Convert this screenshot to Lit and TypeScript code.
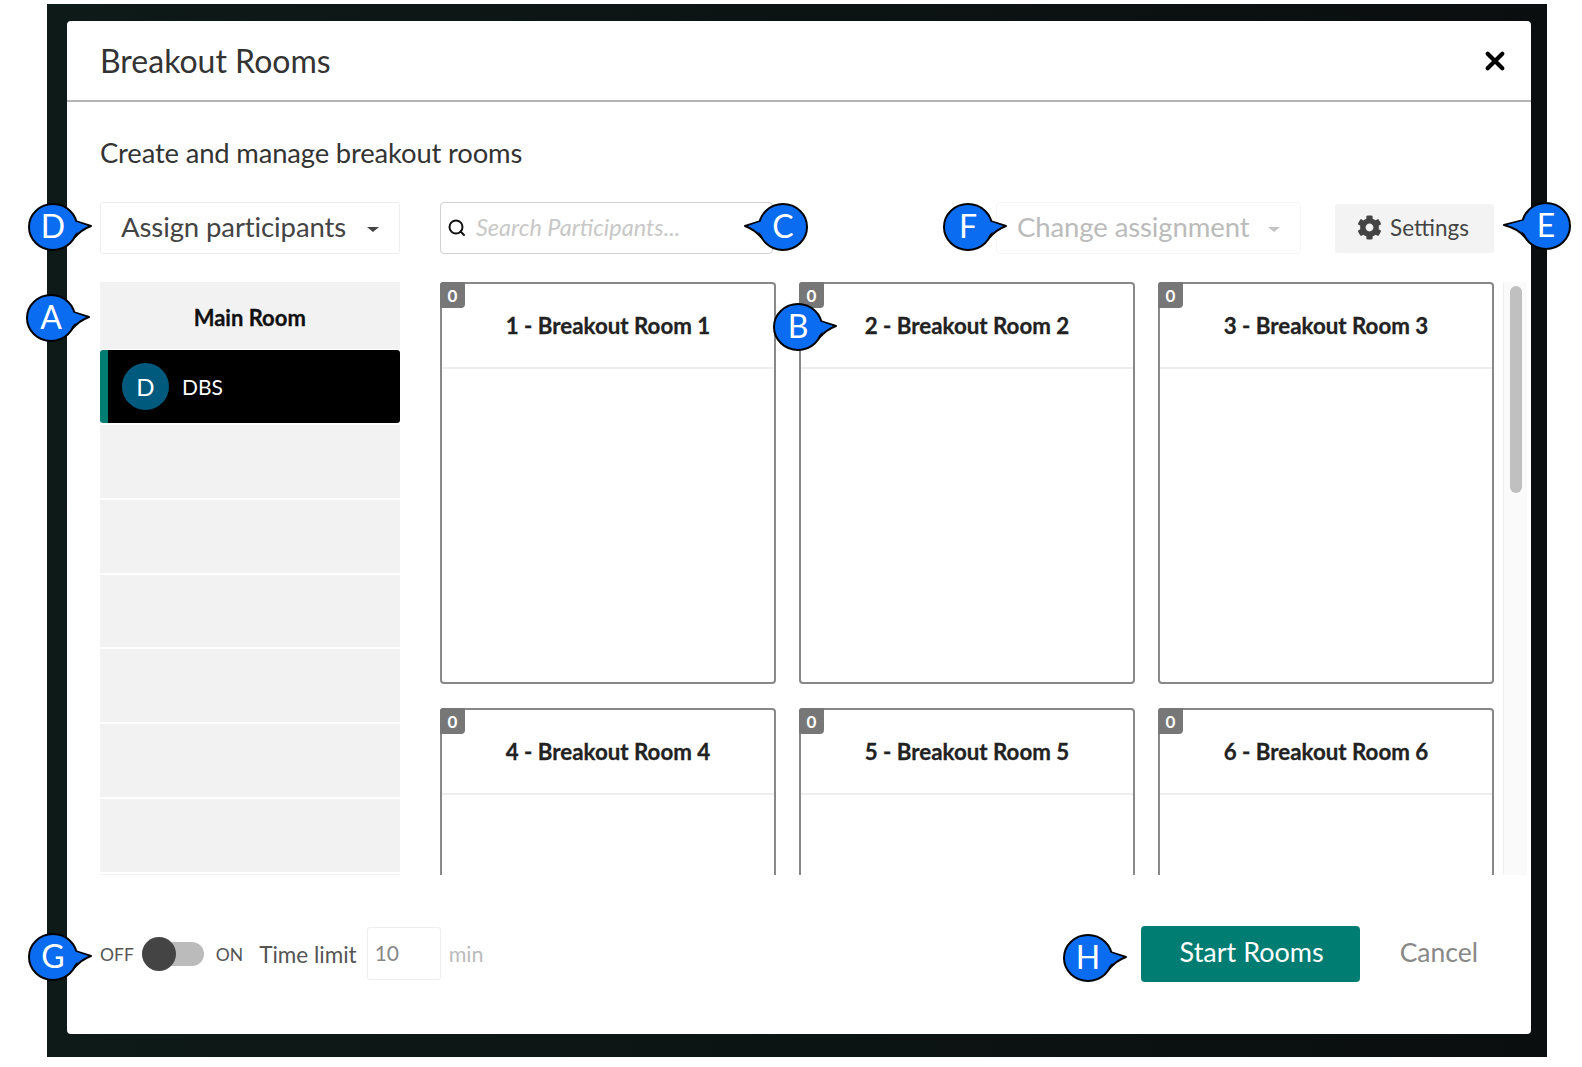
import { LitElement, html, css, svg } from 'lit';
import { customElement } from 'lit/decorators.js';

// label, centre x/y, direction of the tail, tail length
const CALLOUTS: [string, number, number, number, number][] = [
  ['D', 53, 227, 1, 38],
  ['A', 51, 318, 1, 38],
  ['C', 783, 227, -1, 38],
  ['B', 798, 327, 1, 38],
  ['F', 968, 227, 1, 38],
  ['E', 1546, 226, -1, 42],
  ['G', 53, 957, 1, 38],
  ['H', 1088, 958, 1, 38],
];

const ROOMS = [1, 2, 3, 4, 5, 6];

@customElement('app-root')
export class AppRoot extends LitElement {
  static styles = css`
    :host {
      display: block;
      position: relative;
      height: 1067px;
      overflow: hidden;
      background: #fff;
      font-family: 'Lato', 'Noto Sans', sans-serif;
      color: #333;
    }
    .frame {
      margin: 4px 35px 0 47px;
      height: 1053px;
      box-sizing: border-box;
      padding: 17px 16px 23px 20px;
      background: linear-gradient(90deg, #0e1a18, #0a0e0e);
    }
    .modal {
      height: 100%;
      background: #fff;
      border-radius: 4px;
      display: flex;
      flex-direction: column;
    }
    .head {
      height: 81px;
      flex: none;
      box-sizing: border-box;
      border-bottom: 2px solid #b4b4b4;
      padding: 0 25px 0 33px;
      display: flex;
      align-items: center;
      justify-content: space-between;
    }
    .title {
      font-size: 32px;
      color: #333;
    }
    .close {
      width: 22px;
      height: 22px;
      display: block;
    }
    .body {
      flex: 1;
      min-height: 0;
      padding: 0 0 0 33px;
      display: flex;
      flex-direction: column;
    }
    .sub {
      height: 100px;
      flex: none;
      box-sizing: border-box;
      padding-top: 30px;
      font-size: 27.4px;
      line-height: 42px;
      letter-spacing: -0.15px;
      color: #333;
    }
    .tools {
      flex: none;
      height: 52px;
      display: flex;
      align-items: center;
    }
    .drop {
      width: 299.5px;
      height: 52px;
      box-sizing: border-box;
      border: 1.5px solid #efefef;
      border-radius: 3px;
      display: flex;
      align-items: center;
      padding: 0 20px 3px;
      justify-content: space-between;
      font-size: 27.5px;
      letter-spacing: -0.1px;
      color: #444;
    }
    .caret {
      width: 0;
      height: 0;
      border-left: 6px solid transparent;
      border-right: 6px solid transparent;
      border-top: 5px solid #444;
      margin-top: 6px;
    }
    .search {
      width: 333px;
      height: 52px;
      margin-left: 40.5px;
      box-sizing: border-box;
      border: 1.5px solid #d0d0d0;
      border-radius: 4px;
      display: flex;
      align-items: center;
      padding: 0 0 2px 6px;
      gap: 9px;
      font-size: 23.5px;
      font-style: italic;
      color: #c8c8c8;
    }
    .search svg {
      width: 20px;
      height: 20px;
      margin-top: 2px;
    }
    .drop.off {
      width: 305px;
      margin-left: auto;
      border-color: #f6f6f6;
      color: #bbb;
    }
    .drop.off .caret {
      border-top-color: #c4c4c4;
    }
    .settings {
      width: 159px;
      height: 49px;
      margin: 0 37px 0 34px;
      box-sizing: border-box;
      padding: 0 3px 2px 0;
      background: #f3f3f3;
      border-radius: 3px;
      display: flex;
      align-items: center;
      justify-content: center;
      gap: 8px;
      font-size: 22.5px;
      color: #444;
    }
    .settings svg {
      width: 25px;
      height: 25px;
    }
    .main {
      flex: 1;
      min-height: 0;
      margin-top: 28px;
      display: flex;
      overflow: hidden;
    }
    .left {
      width: 299.5px;
      flex: none;
      display: flex;
      flex-direction: column;
      gap: 2px;
    }
    .left-head {
      height: 67px;
      flex: none;
      box-sizing: border-box;
      padding-top: 3px;
      background: #f2f2f2;
      display: flex;
      align-items: center;
      justify-content: center;
      font-weight: 700;
      font-size: 22px;
      -webkit-text-stroke: 0.3px #111;
      color: #111;
    }
    .person {
      height: 73px;
      flex: none;
      margin-top: -1px;
      background: #000;
      border-left: 8px solid #007d73;
      border-radius: 3px;
      display: flex;
      align-items: center;
      gap: 13px;
      padding-left: 14px;
      color: #fff;
      font-size: 21px;
    }
    .avatar {
      width: 47px;
      height: 47px;
      border-radius: 50%;
      background: #005a7d;
      display: flex;
      align-items: center;
      justify-content: center;
      font-size: 24px;
    }
    .slot {
      height: 72.8px;
      flex: none;
      background: #f2f2f2;
    }
    .grid {
      margin-left: 40.5px;
      width: 1054px;
      display: grid;
      grid-template-columns: repeat(3, 336px);
      grid-auto-rows: 402px;
      column-gap: 23px;
      row-gap: 24px;
      flex: none;
    }
    .card {
      position: relative;
      box-sizing: border-box;
      border: 2px solid #888;
      border-radius: 4px;
    }
    .card-head {
      height: 85px;
      box-sizing: border-box;
      border-bottom: 2px solid #eee;
      display: flex;
      align-items: center;
      justify-content: center;
      font-weight: 700;
      font-size: 22.3px;
      -webkit-text-stroke: 0.3px #222;
      color: #222;
    }
    .count {
      position: absolute;
      left: -2px;
      top: -2px;
      width: 25px;
      height: 26px;
      background: #777;
      border-radius: 3px 0 4px 0;
      color: #fff;
      font-weight: 700;
      font-size: 17px;
      line-height: 27px;
      text-align: center;
    }
    .track {
      flex: none;
      width: 24px;
      margin-left: 9px;
      box-sizing: border-box;
      border-left: 1px solid #eee;
      background: #fafafa;
      padding: 4px 5px 0 6px;
    }
    .thumb {
      height: 207px;
      background: #c0c0c0;
      border-radius: 7px;
    }
    .foot {
      flex: none;
      height: 159px;
      box-sizing: border-box;
      padding: 0 53px 1px 33px;
      display: flex;
      align-items: center;
      font-size: 17.5px;
      color: #555;
    }
    .toggle {
      position: relative;
      width: 62px;
      height: 24px;
      margin: 0 12px 0 8px;
      background: #bbb;
      border-radius: 12px;
    }
    .knob {
      position: absolute;
      left: 0;
      top: -5px;
      width: 34px;
      height: 34px;
      border-radius: 50%;
      background: #444;
    }
    .limit {
      margin-left: 16px;
      font-size: 22.5px;
    }
    .minutes {
      width: 74px;
      height: 53px;
      margin: 0 0 1px 10px;
      box-sizing: border-box;
      border: 1.5px solid #eee;
      border-radius: 3px;
      padding: 0 0 3px 7px;
      display: flex;
      align-items: center;
      font-size: 21px;
      color: #888;
    }
    .min {
      margin-left: 8px;
      font-size: 21.5px;
      color: #bbb;
    }
    .start {
      margin: 0 0 1px auto;
      width: 219px;
      height: 56px;
      box-sizing: border-box;
      padding: 0 0 4px 3px;
      background: #007d73;
      border-radius: 4px;
      color: #fff;
      font-size: 27px;
      display: flex;
      align-items: center;
      justify-content: center;
    }
    .cancel {
      margin: 0 0 5px 40px;
      font-size: 26.5px;
      color: #888;
    }
    .callout {
      position: absolute;
      width: 100px;
      height: 60px;
      overflow: visible;
    }
    .callout text {
      font-family: 'Lato', sans-serif;
      font-size: 32px;
      fill: #fff;
      text-anchor: middle;
    }
  `;

  renderCallout(c: [string, number, number, number, number]) {
    const [label, x, y, dir, tip] = c;
    return html`<svg
      class="callout"
      viewBox="-50 -30 100 60"
      style="left:${x - 50}px;top:${y - 30}px"
    >
      ${svg`<g transform="scale(${dir},1)">
        <path d="M22 -6L${tip} -1Q29 2 20 12Z" fill="#0a6cf0" stroke="#000" stroke-width="2" stroke-linejoin="round" />
        <ellipse rx="24" ry="23" fill="#0a6cf0" stroke="#000" stroke-width="2" />
        <path d="M21 -6L${tip - 3} -1Q28 1 19 10Z" fill="#0a6cf0" />
      </g>`}
      <text y="11">${label}</text>
    </svg>`;
  }

  renderCard(n: number) {
    return html`<div class="card">
      <div class="count">0</div>
      <div class="card-head">${n} - Breakout Room ${n}</div>
    </div>`;
  }

  render() {
    return html`
      <div class="frame">
        <div class="modal">
          <div class="head">
            <span class="title">Breakout Rooms</span>
            <svg class="close" viewBox="0 0 24 24">
              <path d="M4 4L20 20M20 4L4 20" stroke="#000" stroke-width="4.6" stroke-linecap="round" />
            </svg>
          </div>
          <div class="body">
            <div class="sub">Create and manage breakout rooms</div>
            <div class="tools">
              <div class="drop">Assign participants<span class="caret"></span></div>
              <div class="search">
                <svg viewBox="0 0 20 20" fill="none" stroke="#111" stroke-width="2">
                  <circle cx="9" cy="9" r="6.5" />
                  <path d="M13.5 13.5L17 17" stroke-linecap="round" />
                </svg>
                Search Participants...
              </div>
              <div class="drop off">Change assignment<span class="caret"></span></div>
              <div class="settings">
                <svg viewBox="0 0 512 512">
                  <path
                    fill="#444"
                    d="M487.4 315.7l-42.6-24.6c4.3-23.2 4.3-47 0-70.2l42.6-24.6c4.9-2.8 7.1-8.6 5.5-14-11.1-35.6-30-67.8-54.7-94.6-3.8-4.1-10-5.1-14.8-2.3L380.8 110c-17.9-15.4-38.5-27.3-60.8-35.1V25.8c0-5.6-3.9-10.5-9.4-11.7-36.7-8.2-74.3-7.8-109.2 0-5.5 1.2-9.4 6.1-9.4 11.7V75c-22.2 7.9-42.8 19.8-60.8 35.1L88.7 85.5c-4.9-2.8-11-1.9-14.8 2.3-24.7 26.7-43.6 58.9-54.7 94.6-1.7 5.4.6 11.2 5.5 14L67.3 221c-4.3 23.2-4.3 47 0 70.2l-42.6 24.6c-4.9 2.8-7.1 8.6-5.5 14 11.1 35.6 30 67.8 54.7 94.6 3.8 4.1 10 5.1 14.8 2.3l42.6-24.6c17.9 15.4 38.5 27.3 60.8 35.1v49.2c0 5.6 3.9 10.5 9.4 11.7 36.7 8.2 74.3 7.8 109.2 0 5.5-1.2 9.4-6.1 9.4-11.7v-49.2c22.2-7.9 42.8-19.8 60.8-35.1l42.6 24.6c4.9 2.8 11 1.9 14.8-2.3 24.7-26.7 43.6-58.9 54.7-94.6 1.5-5.5-.7-11.3-5.6-14.1zM256 336c-44.1 0-80-35.9-80-80s35.9-80 80-80 80 35.9 80 80-35.9 80-80 80z"
                  />
                </svg>
                Settings
              </div>
            </div>
            <div class="main">
              <div class="left">
                <div class="left-head">Main Room</div>
                <div class="person">
                  <span class="avatar">D</span>
                  DBS
                </div>
                ${[1, 2, 3, 4, 5, 6, 7].map(() => html`<div class="slot"></div>`)}
              </div>
              <div class="grid">${ROOMS.map((n) => this.renderCard(n))}</div>
              <div class="track"><div class="thumb"></div></div>
            </div>
          </div>
          <div class="foot">
            <span>OFF</span>
            <div class="toggle"><div class="knob"></div></div>
            <span>ON</span>
            <span class="limit">Time limit</span>
            <div class="minutes">10</div>
            <span class="min">min</span>
            <div class="start">Start Rooms</div>
            <span class="cancel">Cancel</span>
          </div>
        </div>
      </div>
      ${CALLOUTS.map((c) => this.renderCallout(c))}
    `;
  }
}
